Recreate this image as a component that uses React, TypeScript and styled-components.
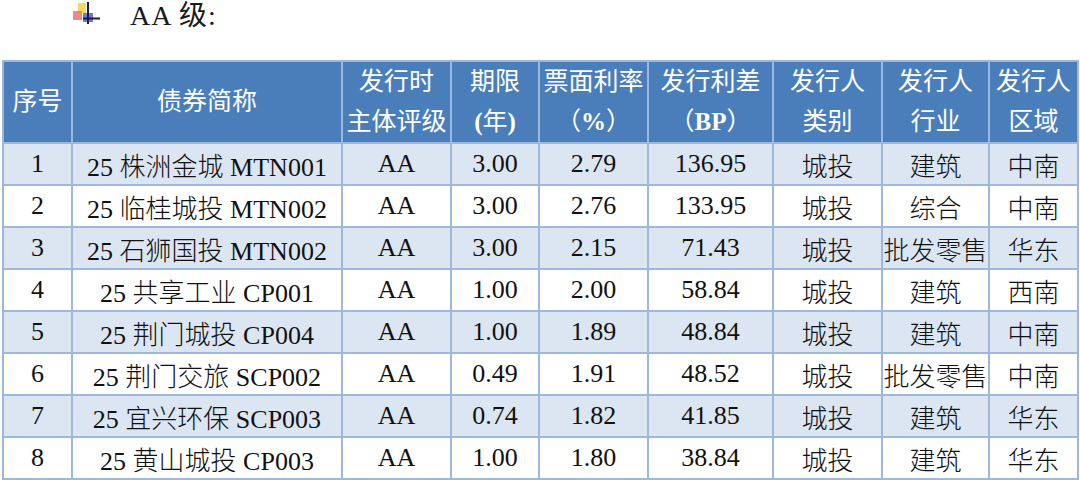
import React from "react";
import styled, { createGlobalStyle } from "styled-components";

const GlobalStyle = createGlobalStyle`
  body {
    margin: 0;
    background: #ffffff;
    font-family: "Liberation Serif", "Noto Sans CJK SC", serif;
  }
`;

const Page = styled.div`
  width: 1080px;
  height: 480px;
  overflow: hidden;
  background: #ffffff;
`;

const Heading = styled.div`
  display: flex;
  align-items: flex-start;
  gap: 26px;
  height: 36px;
  padding-left: 72px;
  font-size: 28px;
  color: #1a1a1a;
  margin-bottom: 24px;
`;

const HeadingText = styled.span`
  letter-spacing: 1px;
  line-height: 32px;
`;

const IconBox = styled.svg`
  flex: none;
  margin-top: 1px;
`;

const Table = styled.table`
  margin-left: 2px;
  width: 1076px;
  table-layout: fixed;
  border-collapse: collapse;
  font-size: 26px;
`;

const HeadCell = styled.th`
  height: 78px;
  padding: 0;
  background: #4a7ebb;
  color: #ffffff;
  font-size: 25px;
  font-weight: 400;
  line-height: 40px;
  text-align: center;
  border: 2px solid #9cb8dc;
  white-space: nowrap;
`;

const Latin = styled.b`
  font-family: "Liberation Serif", serif;
  font-weight: 700;
`;

const Row = styled.tr<{ $shaded: boolean }>`
  background: ${({ $shaded }) => ($shaded ? "#dce6f2" : "#ffffff")};
`;

const Cell = styled.td`
  height: 40px;
  padding: 0;
  text-align: center;
  color: #111111;
  font-weight: 300;
  border: 2px solid #9cb8dc;
  white-space: nowrap;
`;

function BulletIcon() {
  return (
    <IconBox width="32" height="24" viewBox="0 0 32 24">
      <rect x="6" y="2" width="8" height="10" fill="#f6cf45" opacity="0.85" />
      <rect x="1" y="10" width="9" height="9" fill="#ee6a6a" opacity="0.8" />
      <rect x="11" y="12" width="10" height="9" fill="#5563cc" opacity="0.85" />
      <line x1="16" y1="1" x2="16" y2="23" stroke="#1c1c3c" strokeWidth="2" />
      <line x1="11" y1="17.5" x2="28" y2="17.5" stroke="#1c1c3c" strokeWidth="2" />
    </IconBox>
  );
}

const widths = [69, 270, 109, 88, 109, 125, 109, 107, 89];

const rows = [
  ["1", "25 株洲金城 MTN001", "AA", "3.00", "2.79", "136.95", "城投", "建筑", "中南"],
  ["2", "25 临桂城投 MTN002", "AA", "3.00", "2.76", "133.95", "城投", "综合", "中南"],
  ["3", "25 石狮国投 MTN002", "AA", "3.00", "2.15", "71.43", "城投", "批发零售", "华东"],
  ["4", "25 共享工业 CP001", "AA", "1.00", "2.00", "58.84", "城投", "建筑", "西南"],
  ["5", "25 荆门城投 CP004", "AA", "1.00", "1.89", "48.84", "城投", "建筑", "中南"],
  ["6", "25 荆门交旅 SCP002", "AA", "0.49", "1.91", "48.52", "城投", "批发零售", "中南"],
  ["7", "25 宜兴环保 SCP003", "AA", "0.74", "1.82", "41.85", "城投", "建筑", "华东"],
  ["8", "25 黄山城投 CP003", "AA", "1.00", "1.80", "38.84", "城投", "建筑", "华东"],
];

export default function App() {
  return (
    <Page>
      <GlobalStyle />
      <Heading>
        <BulletIcon />
        <HeadingText>AA 级:</HeadingText>
      </Heading>
      <Table>
        <colgroup>
          {widths.map((w, i) => (
            <col key={i} style={{ width: w }} />
          ))}
        </colgroup>
        <thead>
          <tr>
            <HeadCell>序号</HeadCell>
            <HeadCell>债券简称</HeadCell>
            <HeadCell>
              发行时
              <br />
              主体评级
            </HeadCell>
            <HeadCell>
              期限
              <br />
              <Latin>(</Latin>年<Latin>)</Latin>
            </HeadCell>
            <HeadCell>
              票面利率
              <br />（<Latin>%</Latin>）
            </HeadCell>
            <HeadCell>
              发行利差
              <br />（<Latin>BP</Latin>）
            </HeadCell>
            <HeadCell>
              发行人
              <br />
              类别
            </HeadCell>
            <HeadCell>
              发行人
              <br />
              行业
            </HeadCell>
            <HeadCell>
              发行人
              <br />
              区域
            </HeadCell>
          </tr>
        </thead>
        <tbody>
          {rows.map((r, i) => (
            <Row key={r[0]} $shaded={i % 2 === 0}>
              {r.map((c, j) => (
                <Cell key={j}>{c}</Cell>
              ))}
            </Row>
          ))}
        </tbody>
      </Table>
    </Page>
  );
}
